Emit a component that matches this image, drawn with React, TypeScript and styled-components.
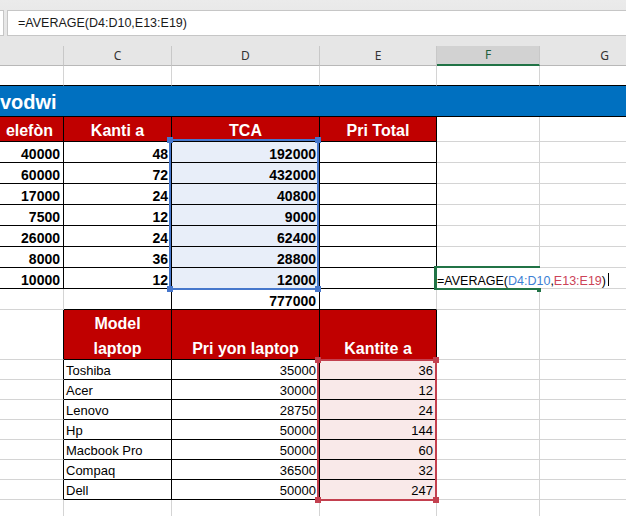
import React from 'react';
import styled, { createGlobalStyle, css } from 'styled-components';

const FONT = '"Liberation Sans", Arial, sans-serif';
const UI_FONT = '"Noto Sans", "Liberation Sans", sans-serif';

const GRID = '#d4d4d4';
const INK = '#000000';
const RED = '#c00000';
const BLUE = '#0070c0';
const REF_BLUE = '#4677cc';
const REF_RED = '#c3404f';
const REF_BLUE_TEXT = '#3d7fd4';
const REF_RED_TEXT = '#cc4358';
const SEL_BLUE = '#e8eef9';
const SEL_RED = '#f9e9e9';
const GREEN = '#217346';

const COLS = [64, 108, 148, 117, 103, 130];
const COLUMN_TEMPLATE = COLS.map((w) => `${w}px`).join(' ');
const LETTERS = ['', 'C', 'D', 'E', 'F', 'G'];
const ROW_H = [20, 31, 25, 21, 21, 21, 21, 21, 21, 21, 21, 50, 20, 20, 20, 20, 20, 20, 20, 20];
const SHEET_TOP = 66;

type Kind = 'blank' | 'title' | 'head' | 'head2' | 'bold' | 'plain';
type Align = 'left' | 'center' | 'right';

interface CellDef {
  text?: string;
  kind?: Kind;
  align?: Align;
  fill?: string;
  boxed?: boolean;
  span?: number;
  padR?: number;
}

const pad = (cells: CellDef[]): CellDef[] => {
  const out = [...cells];
  let n = out.reduce((s, c) => s + (c.span ?? 1), 0);
  while (n < COLS.length) {
    out.push({});
    n += 1;
  }
  return out;
};

const phones: [number, number, number][] = [
  [40000, 48, 192000],
  [60000, 72, 432000],
  [17000, 24, 40800],
  [7500, 12, 9000],
  [26000, 24, 62400],
  [8000, 36, 28800],
  [10000, 12, 12000],
];

const laptops: [string, number, number][] = [
  ['Toshiba', 35000, 36],
  ['Acer', 30000, 12],
  ['Lenovo', 28750, 24],
  ['Hp', 50000, 144],
  ['Macbook Pro', 50000, 60],
  ['Compaq', 36500, 32],
  ['Dell', 50000, 247],
];

const head = (text: string, extra: Partial<CellDef> = {}): CellDef => ({
  text,
  kind: 'head',
  align: 'center',
  fill: RED,
  boxed: true,
  ...extra,
});

const SHEET: CellDef[][] = [
  pad([]),
  [{ text: 'vodwi', kind: 'title', align: 'left', fill: BLUE, boxed: true, span: 6 }],
  pad([
    head('elefòn', { align: 'right', padR: 10 }),
    head('Kanti a'),
    head('TCA'),
    head('Pri Total'),
  ]),
  ...phones.map(([p, q, t]) =>
    pad([
      { text: String(p), kind: 'bold', align: 'right', boxed: true },
      { text: String(q), kind: 'bold', align: 'right', boxed: true },
      { text: String(t), kind: 'bold', align: 'right', boxed: true, fill: SEL_BLUE },
      { boxed: true },
    ])
  ),
  pad([{}, {}, { text: '777000', kind: 'bold', align: 'right', boxed: true }]),
  pad([
    {},
    head('Model\nlaptop', { kind: 'head2' }),
    head('Pri yon laptop', { kind: 'head2' }),
    head('Kantite a', { kind: 'head2' }),
  ]),
  ...laptops.map(([n, p, q]) =>
    pad([
      {},
      { text: n, kind: 'plain', align: 'left', boxed: true },
      { text: String(p), kind: 'plain', align: 'right', boxed: true },
      { text: String(q), kind: 'plain', align: 'right', boxed: true, fill: SEL_RED },
    ])
  ),
  pad([]),
];

const boxedGrid: boolean[][] = SHEET.map((r) => {
  const out: boolean[] = [];
  r.forEach((c) => {
    for (let i = 0; i < (c.span ?? 1); i += 1) out.push(!!c.boxed);
  });
  return out;
});
const isBoxed = (r: number, c: number) => boxedGrid[r]?.[c] ?? false;

const GlobalStyle = createGlobalStyle`
  html, body {
    margin: 0;
    padding: 0;
    background: #ffffff;
    overflow: hidden;
  }
  body {
    font-family: ${FONT};
  }
`;

const Window = styled.div`
  width: 626px;
  height: 516px;
  overflow: hidden;
  background: #ffffff;
`;

const Toolbar = styled.div`
  display: flex;
  box-sizing: border-box;
  height: 46px;
  padding: 10px 0;
  background: linear-gradient(#ebebeb 0, #e9e9e9 10px, #e6e6e6 36px);
`;

const NameBox = styled.div`
  width: 4px;
  box-sizing: border-box;
  background: #ffffff;
  border: 1px solid #c6c6c6;
  border-left: none;
`;

const FormulaBox = styled.div`
  flex: 1;
  margin-left: 3px;
  box-sizing: border-box;
  display: flex;
  align-items: center;
  padding: 1px 0 0 10px;
  background: #ffffff;
  border: 1px solid #c6c6c6;
  border-right: none;
  font: 400 12.5px/1 ${FONT};
  color: #1a1a1a;
  white-space: nowrap;
`;

const ColumnBar = styled.div`
  display: grid;
  grid-template-columns: ${COLUMN_TEMPLATE};
  height: 20px;
  background: #e6e6e6;
`;

const ColumnHead = styled.div<{ $active: boolean }>`
  box-sizing: border-box;
  display: flex;
  align-items: center;
  justify-content: center;
  border-right: 1px solid #c8c8c8;
  border-bottom: ${(p) => (p.$active ? `2px solid ${GREEN}` : '1px solid #b8b8b8')};
  background: ${(p) => (p.$active ? '#d2d2d2' : '#e6e6e6')};
  color: ${(p) => (p.$active ? '#1d5e3b' : '#333333')};
  font: 400 12px/1 ${UI_FONT};
`;

const Sheet = styled.div`
  position: relative;
  display: grid;
  grid-template-columns: ${COLUMN_TEMPLATE};
  grid-template-rows: ${ROW_H.map((h) => `${h}px`).join(' ')};
`;

const kindStyles: Record<Kind, ReturnType<typeof css>> = {
  blank: css``,
  title: css`
    font: 700 20px/1 ${FONT};
    color: #ffffff;
    padding: 0 0 4.5px 0;
  `,
  head: css`
    font: 700 16px/1 ${FONT};
    color: #ffffff;
    padding: 0 2px 2.5px;
  `,
  head2: css`
    font: 700 16px/25px ${FONT};
    color: #ffffff;
    padding: 0 2px 0;
    white-space: pre-line;
    text-align: center;
  `,
  bold: css`
    font: 700 14px/1 ${FONT};
    color: ${INK};
    padding: 0 3px 1.5px;
  `,
  plain: css`
    font: 400 13px/1 ${FONT};
    color: ${INK};
    padding: 0 3px 2px 2px;
  `,
};

const Cell = styled.div<{
  $fill?: string;
  $br: string;
  $bb: string;
  $align: Align;
  $kind: Kind;
  $span: number;
  $padR?: number;
}>`
  grid-column: span ${(p) => p.$span};
  box-sizing: border-box;
  min-width: 0;
  display: flex;
  align-items: flex-end;
  justify-content: ${(p) =>
    p.$align === 'left' ? 'flex-start' : p.$align === 'center' ? 'center' : 'flex-end'};
  background: ${(p) => p.$fill ?? '#ffffff'};
  border-right: 1px solid ${(p) => p.$br};
  border-bottom: 1px solid ${(p) => p.$bb};
  overflow: hidden;
  white-space: nowrap;
  ${(p) => kindStyles[p.$kind]}
  ${(p) => (p.$padR !== undefined ? `padding-right: ${p.$padR}px;` : '')}
`;

const Label = styled.span<{ $kind: Kind }>`
  display: block;
  ${(p) => (p.$kind === 'head2' ? 'margin-bottom: -2px;' : '')}
`;

const RangeBox = styled.div<{ $color: string; $x: number; $y: number; $w: number; $h: number }>`
  position: absolute;
  left: ${(p) => p.$x}px;
  top: ${(p) => p.$y - SHEET_TOP}px;
  width: ${(p) => p.$w}px;
  height: ${(p) => p.$h}px;
  box-sizing: border-box;
  border: 2px solid ${(p) => p.$color};
  pointer-events: none;
`;

type Corner = 'tl' | 'tr' | 'bl' | 'br';

const Handle = styled.span<{ $color: string; $corner: Corner }>`
  position: absolute;
  width: 6px;
  height: 6px;
  background: ${(p) => p.$color};
  ${(p) => (p.$corner[0] === 't' ? 'top: -4px;' : 'bottom: -4px;')}
  ${(p) => (p.$corner[1] === 'l' ? 'left: -4px;' : 'right: -4px;')}
`;

const Editor = styled.div`
  position: absolute;
  left: 434px;
  top: ${266 - SHEET_TOP}px;
  width: 106px;
  height: 24px;
  box-sizing: border-box;
  display: flex;
  border: 2px solid ${GREEN};
  border-left-width: 3px;
  border-right: none;
`;

const EditorText = styled.div`
  display: flex;
  align-items: flex-end;
  flex-shrink: 0;
  height: 100%;
  box-sizing: border-box;
  padding: 0 4px 1px 0;
  background: #ffffff;
  white-space: nowrap;
  font: 400 12.5px/1 ${FONT};
  color: ${INK};
`;

const Ref = styled.span<{ $color: string }>`
  color: ${(p) => p.$color};
`;

const Caret = styled.span`
  width: 1px;
  height: 13px;
  margin: 0 0 1.5px 2px;
  background: #000000;
`;

const FillHandle = styled.span`
  position: absolute;
  left: 100px;
  top: 20px;
  width: 4px;
  height: 4px;
  background: ${GREEN};
`;

const CORNERS: Corner[] = ['tl', 'tr', 'bl', 'br'];

function renderSheet() {
  return SHEET.map((cells, r) => {
    let col = 0;
    return cells.map((cell, i) => {
      const span = cell.span ?? 1;
      const start = col;
      col += span;
      const last = start + span - 1;
      const br = isBoxed(r, last) || isBoxed(r, last + 1) ? INK : GRID;
      let bottomBlack = false;
      for (let c = start; c <= last; c += 1) {
        if (isBoxed(r, c) || isBoxed(r + 1, c)) bottomBlack = true;
      }
      const kind = cell.kind ?? 'blank';
      return (
        <Cell
          key={`${r}-${i}`}
          $span={span}
          $fill={cell.fill}
          $br={br}
          $bb={bottomBlack ? INK : GRID}
          $align={cell.align ?? 'left'}
          $kind={kind}
          $padR={cell.padR}
        >
          {cell.text ? <Label $kind={kind}>{cell.text}</Label> : null}
        </Cell>
      );
    });
  });
}

export default function App() {
  return (
    <>
      <GlobalStyle />
      <Window>
        <Toolbar>
          <NameBox />
          <FormulaBox>=AVERAGE(D4:D10,E13:E19)</FormulaBox>
        </Toolbar>
        <ColumnBar>
          {LETTERS.map((l, i) => (
            <ColumnHead key={i} $active={l === 'F'}>
              {l}
            </ColumnHead>
          ))}
        </ColumnBar>
        <Sheet>
          {renderSheet()}
          <RangeBox $color={REF_BLUE} $x={169} $y={139} $w={150} $h={151}>
            {CORNERS.map((c) => (
              <Handle key={c} $color={REF_BLUE} $corner={c} />
            ))}
          </RangeBox>
          <RangeBox $color={REF_RED} $x={317} $y={359} $w={120} $h={142}>
            {CORNERS.map((c) => (
              <Handle key={c} $color={REF_RED} $corner={c} />
            ))}
          </RangeBox>
          <Editor>
            <EditorText>
              <span>=AVERAGE(</span>
              <Ref $color={REF_BLUE_TEXT}>D4:D10</Ref>
              <span>,</span>
              <Ref $color={REF_RED_TEXT}>E13:E19</Ref>
              <span>)</span>
              <Caret />
            </EditorText>
            <FillHandle />
          </Editor>
        </Sheet>
      </Window>
    </>
  );
}
